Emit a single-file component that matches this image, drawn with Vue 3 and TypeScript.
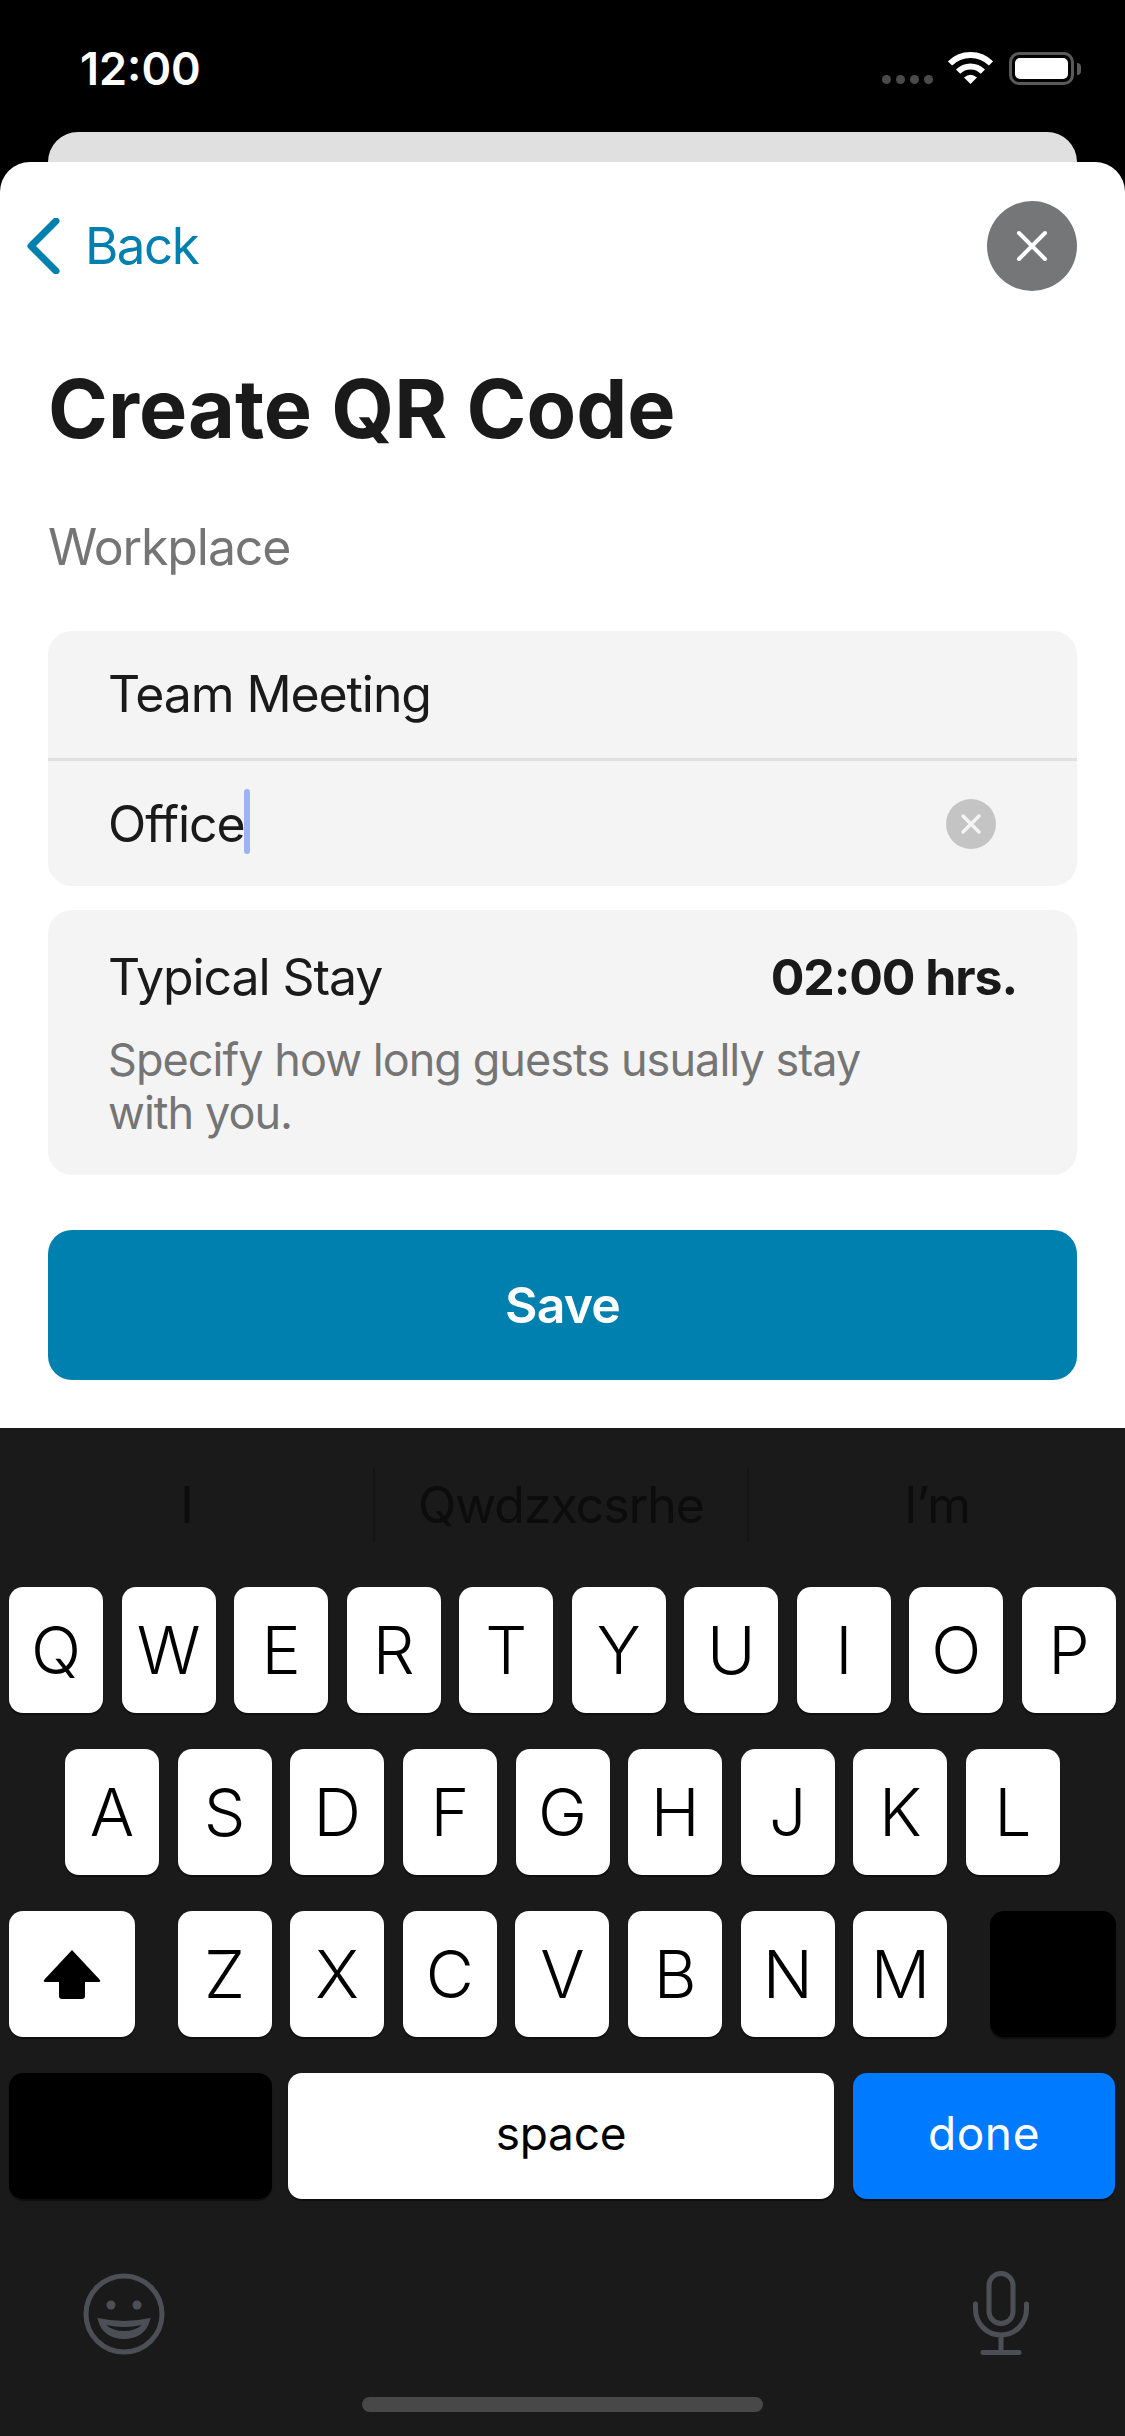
<template>
  <div class="screen">
    <header class="status-bar">
      <span class="time">12:00</span>
      <div class="status-icons">
        <div class="signal">
          <i v-for="n in 4" :key="n"></i>
        </div>
        <svg class="wifi" width="45" height="32" viewBox="0 0 45 32">
          <path d="M2 11.5A29 29 0 0 1 43 11.5" fill="none" stroke="#fff" stroke-width="6" />
          <path d="M10.1 19.6A17.5 17.5 0 0 1 34.9 19.6" fill="none" stroke="#fff" stroke-width="6" />
          <path d="M22.5 32L16 25.5Q22.5 20 29 25.5Z" fill="#fff" />
        </svg>
        <div class="battery">
          <div class="battery-body"><div class="battery-fill"></div></div>
          <div class="battery-nub"></div>
        </div>
      </div>
    </header>

    <div class="peek-card"></div>

    <main class="sheet">
      <nav class="nav">
        <div class="back">
          <svg width="34" height="56" viewBox="0 0 34 56">
            <path d="M30 3L5 28L30 53" fill="none" stroke="#0080af" stroke-width="7" stroke-linecap="round" stroke-linejoin="round" />
          </svg>
          <span>Back</span>
        </div>
        <button class="close" type="button" aria-label="Close">
          <svg width="32" height="32" viewBox="0 0 32 32">
            <path d="M3 3L29 29M29 3L3 29" stroke="#fff" stroke-width="4" stroke-linecap="round" />
          </svg>
        </button>
      </nav>

      <h1 class="title">Create QR Code</h1>
      <p class="subtitle">Workplace</p>

      <section class="card fields">
        <div class="field field-top">Team Meeting</div>
        <div class="divider"></div>
        <div class="field field-bottom">
          <span class="value">Office<i class="caret"></i></span>
          <span class="clear">
            <svg width="22" height="22" viewBox="0 0 22 22">
              <path d="M3 3L19 19M19 3L3 19" stroke="#f4f4f4" stroke-width="3.5" stroke-linecap="round" />
            </svg>
          </span>
        </div>
      </section>

      <section class="card stay">
        <div class="stay-row">
          <span>Typical Stay</span>
          <strong>02:00 hrs.</strong>
        </div>
        <p class="stay-note">Specify how long guests usually stay<br />with you.</p>
      </section>

      <button class="save" type="button">Save</button>
    </main>

    <footer class="keyboard">
      <div class="suggestions">
        <span v-for="(word, i) in suggestions" :key="word" class="suggestion" :class="{ ruled: i > 0 }">{{ word }}</span>
      </div>

      <div class="keys">
        <div class="key-row">
          <button v-for="k in rowOne" :key="k" class="key" type="button">{{ k }}</button>
        </div>
        <div class="key-row row-two">
          <button v-for="k in rowTwo" :key="k" class="key" type="button">{{ k }}</button>
        </div>
        <div class="key-row row-three">
          <button class="key wide" type="button" aria-label="Shift">
            <svg width="58" height="51" viewBox="0 0 58 51">
              <path d="M29 1L57 31Q58 33 55 33H42V47Q42 50 39 50H19Q16 50 16 47V33H3Q0 33 1 31Z" fill="#000" />
            </svg>
          </button>
          <div class="letters">
            <button v-for="k in rowThree" :key="k" class="key" type="button">{{ k }}</button>
          </div>
          <div class="key wide blank"></div>
        </div>
        <div class="key-row row-four">
          <div class="key blank numbers"></div>
          <button class="key space" type="button">space</button>
          <button class="key done" type="button">done</button>
        </div>
      </div>

      <div class="keyboard-icons">
        <svg width="82" height="82" viewBox="0 0 82 82">
          <circle cx="41" cy="41" r="38" fill="none" stroke="#4c5056" stroke-width="5" />
          <circle cx="28" cy="32" r="4.500" fill="#4c5056" />
          <circle cx="54" cy="32" r="4.500" fill="#4c5056" />
          <path d="M15 45Q41 51 67 45Q68 44 67 47C64 60 53 66 41 66C29 66 18 60 15 47Q14 44 15 45Z" fill="#4c5056" />
          <path d="M23 52Q41 56 59 52C54 56 48 58 41 58C34 58 28 56 23 52Z" fill="#1a1a1a" />
        </svg>
        <svg width="56" height="84" viewBox="0 0 56 84">
          <rect x="16" y="2.5" width="24" height="50" rx="12" fill="none" stroke="#4c5056" stroke-width="5" />
          <path d="M2.500 33V38C2.500 53 14 64 28 64C42 64 53.500 53 53.500 38V33M28 64V80M10 81.500H46" fill="none" stroke="#4c5056" stroke-width="5" stroke-linecap="round" />
        </svg>
      </div>

      <div class="home-indicator"></div>
    </footer>
  </div>
</template>

<script setup lang="ts">
const suggestions: string[] = ["I", "Qwdzxcsrhe", "I’m"];
const rowOne: string[] = ["Q", "W", "E", "R", "T", "Y", "U", "I", "O", "P"];
const rowTwo: string[] = ["A", "S", "D", "F", "G", "H", "J", "K", "L"];
const rowThree: string[] = ["Z", "X", "C", "V", "B", "N", "M"];
</script>

<style>
html,
body {
  margin: 0;
  background: #000;
}
</style>

<style scoped>
.screen {
  width: 1125px;
  height: 2436px;
  display: flex;
  flex-direction: column;
  overflow: hidden;
  background: #000;
  font-family: Inter, "Noto Sans", sans-serif;
  color: #1a1a1a;
}

button {
  font-family: inherit;
  border: none;
  padding: 0;
}

/* Status bar */
.status-bar {
  height: 132px;
  flex-shrink: 0;
  box-sizing: border-box;
  padding: 52px 44px 0 80px;
  display: flex;
  justify-content: space-between;
  align-items: flex-start;
  color: #fff;
}

.time {
  font-size: 45px;
  font-weight: 600;
  line-height: 33px;
}

.status-icons {
  display: flex;
  align-items: flex-start;
}

.signal {
  display: flex;
  gap: 5px;
  margin: 23px 15px 0 0;
}

.signal i {
  width: 9px;
  height: 9px;
  border-radius: 50%;
  background: #4a4a4a;
}

.wifi {
  margin-right: 16px;
}

.battery {
  display: flex;
  align-items: center;
}

.battery-body {
  width: 65px;
  height: 33px;
  box-sizing: border-box;
  border: 3px solid #5a5a5a;
  border-radius: 10px;
  padding: 3px;
}

.battery-fill {
  height: 100%;
  background: #fff;
  border-radius: 5px;
}

.battery-nub {
  width: 4px;
  height: 12px;
  margin-left: 3px;
  background: #5a5a5a;
  border-radius: 0 4px 4px 0;
}

.peek-card {
  height: 30px;
  flex-shrink: 0;
  margin: 0 48px;
  background: #e0e0e0;
  border-radius: 30px 30px 0 0;
}

/* Sheet */
.sheet {
  height: 1266px;
  flex-shrink: 0;
  box-sizing: border-box;
  padding: 39px 48px 0;
  background: #fff;
  border-radius: 30px 30px 0 0;
}

.nav {
  display: flex;
  justify-content: space-between;
  align-items: center;
  height: 90px;
}

.back {
  display: flex;
  align-items: center;
  margin-left: -22px;
  gap: 25px;
  color: #0080af;
  font-size: 51px;
  letter-spacing: -1.5px;
  line-height: 60px;
}

.close {
  width: 90px;
  height: 90px;
  border-radius: 50%;
  background: #757678;
  display: flex;
  align-items: center;
  justify-content: center;
}

.title {
  margin: 73px 0 0;
  font-size: 81px;
  font-weight: 700;
  line-height: 90px;
}

.subtitle {
  margin: 63px 0 0;
  font-size: 50px;
  letter-spacing: -1.1px;
  line-height: 60px;
  color: #757575;
}

.card {
  background: #f4f4f4;
  border-radius: 24px;
}

.fields {
  margin-top: 54px;
}

.field {
  display: flex;
  align-items: center;
  justify-content: space-between;
  box-sizing: border-box;
  padding: 0 81px 0 60px;
  font-size: 50px;
  letter-spacing: -1.1px;
}

.field-top {
  height: 127px;
  padding-bottom: 1px;
}

.field-bottom {
  height: 125px;
}

.divider {
  height: 3px;
  background: #e0e0e0;
}

.value {
  position: relative;
}

.caret {
  position: absolute;
  left: calc(100% - 1px);
  top: -5px;
  width: 6px;
  height: 65px;
  border-radius: 3px;
  background: #9db3f5;
}

.clear {
  width: 50px;
  height: 50px;
  border-radius: 50%;
  background: #c4c4c4;
  display: flex;
  align-items: center;
  justify-content: center;
}

.stay {
  margin-top: 24px;
  padding: 37px 60px 36px;
}

.stay-row {
  display: flex;
  justify-content: space-between;
  font-size: 50px;
  letter-spacing: -1.1px;
  line-height: 60px;
}

.stay-row strong {
  font-weight: 700;
}

.stay-note {
  margin: 26px 0 0;
  font-size: 45px;
  letter-spacing: -0.95px;
  line-height: 53px;
  color: #757575;
}

.save {
  display: block;
  width: 100%;
  height: 150px;
  margin-top: 55px;
  border-radius: 24px;
  background: #0080af;
  color: #fff;
  font-size: 50px;
  font-weight: 600;
  letter-spacing: -0.8px;
}

/* Keyboard */
.keyboard {
  position: relative;
  flex: 1;
  background: #1a1a1a;
}

.suggestions {
  display: grid;
  grid-template-columns: 373px 374px 1fr;
  height: 75px;
  padding-top: 39px;
}

.suggestion {
  display: flex;
  align-items: center;
  justify-content: center;
  font-size: 50px;
  letter-spacing: -1px;
  color: #0c0c0c;
}

.ruled {
  border-left: 2px solid #151515;
}

.keys {
  display: flex;
  flex-direction: column;
  gap: 36px;
  margin-top: 45px;
  padding: 0 9px;
}

.key-row {
  display: flex;
  justify-content: space-between;
  height: 126px;
}

.row-two {
  padding: 0 56px;
}

.key {
  width: 94px;
  height: 126px;
  flex-shrink: 0;
  display: flex;
  align-items: center;
  justify-content: center;
  border-radius: 14px;
  background: #fff;
  color: #000;
  font-size: 66px;
  font-weight: 300;
  box-shadow: 0 2px 1px rgba(0, 0, 0, 0.45);
}

.wide {
  width: 126px;
}

.blank {
  background: #000;
}

.letters {
  display: flex;
  justify-content: space-between;
  width: 770px;
}

.row-four {
  justify-content: flex-start;
}

.numbers {
  width: 263px;
}

.space {
  width: 546px;
  margin: 0 19px 0 16px;
  font-size: 46px;
  font-weight: 400;
  letter-spacing: -0.3px;
  padding-bottom: 6px;
}

.done {
  width: 262px;
  background: #007aff;
  color: #fff;
  font-size: 46px;
  font-weight: 400;
  letter-spacing: 0.6px;
  padding-bottom: 6px;
}

.keyboard-icons {
  display: flex;
  justify-content: space-between;
  align-items: flex-end;
  padding: 0 96px 0 83px;
  margin-top: 72px;
}

.home-indicator {
  position: absolute;
  left: 362px;
  bottom: 24px;
  width: 401px;
  height: 15px;
  border-radius: 8px;
  background: #484848;
}
</style>
